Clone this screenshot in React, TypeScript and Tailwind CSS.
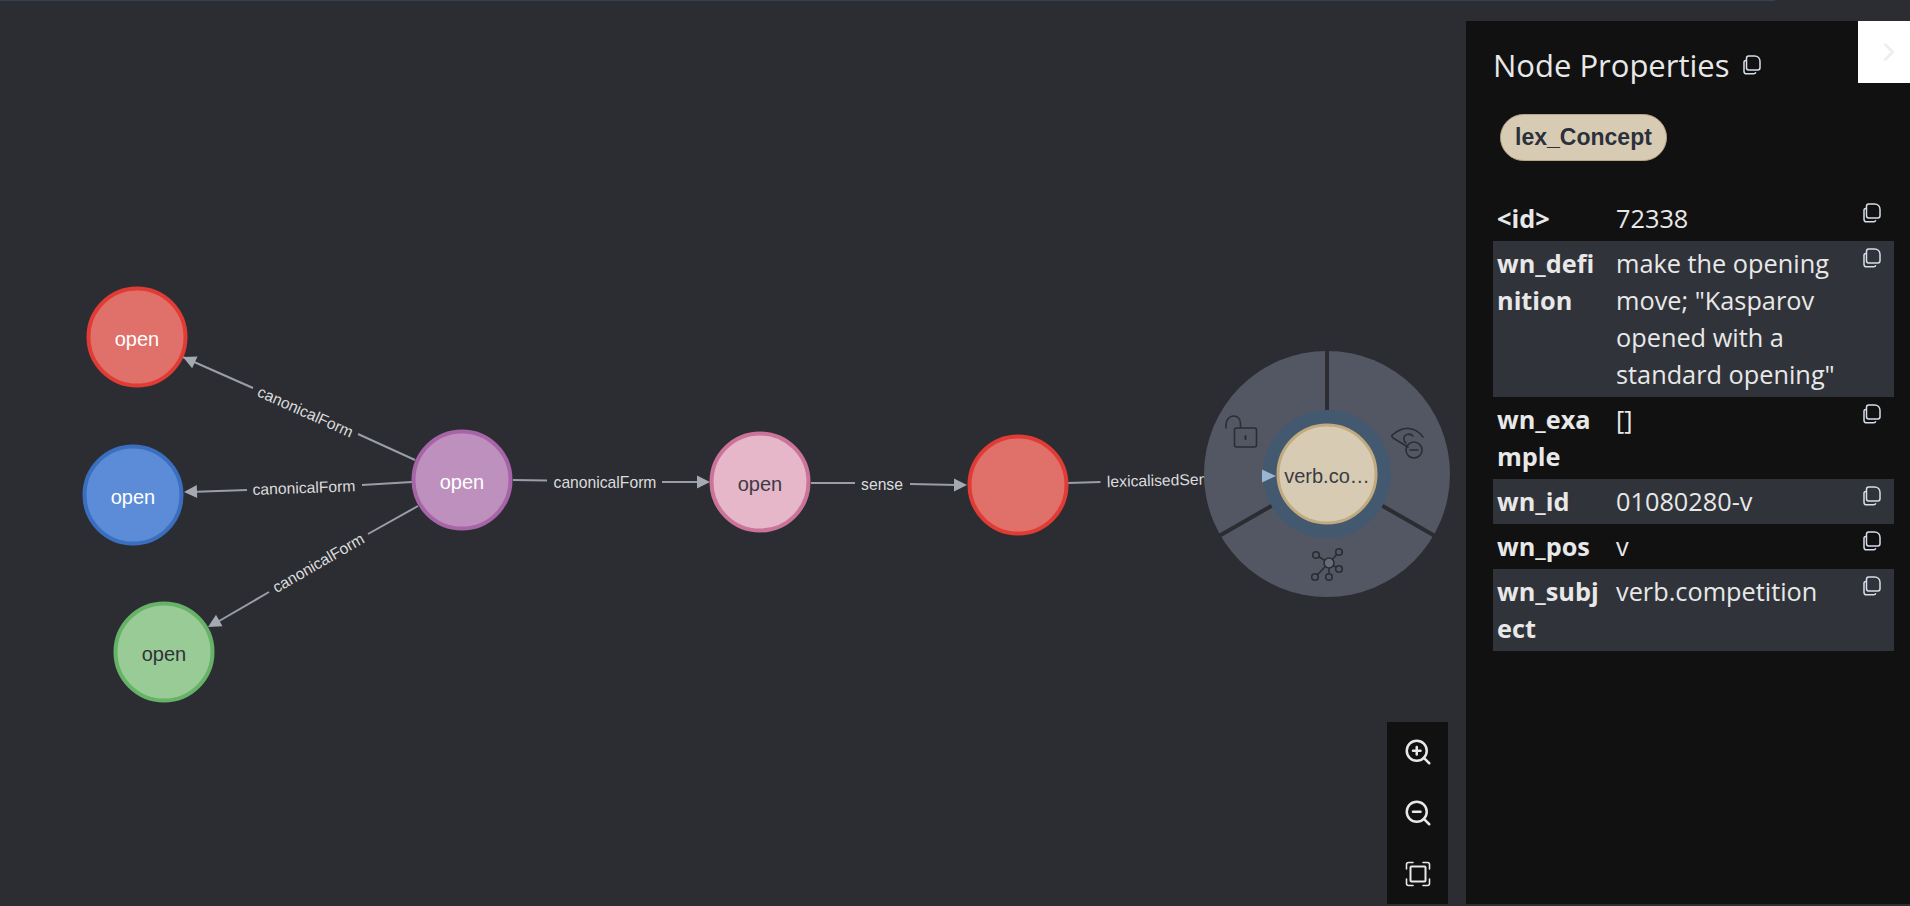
import { ZoomIn, ZoomOut, ChevronRight } from "lucide-react";

const SANS = "font-['Liberation_Sans',Arial,sans-serif]";

// Graph data, coordinates taken from the canvas
const nodes = [
  { x: 137, y: 337, fill: "#e0706a", stroke: "#e03c35", text: "#ffffff", label: "open" },
  { x: 133, y: 495, fill: "#5c8cd8", stroke: "#3a6fbf", text: "#ffffff", label: "open" },
  { x: 164, y: 652, fill: "#99cb97", stroke: "#66b266", text: "#2f3238", label: "open" },
  { x: 462, y: 480, fill: "#be90be", stroke: "#a765a8", text: "#ffffff", label: "open" },
  { x: 760, y: 482, fill: "#e6b6c9", stroke: "#cc7399", text: "#3a3c44", label: "open" },
  { x: 1018, y: 485, fill: "#e0706a", stroke: "#e03c35", text: "#ffffff", label: "" },
];

const edges = [
  { segs: [[415, 460, 358, 434], [253, 388, 176, 354]], tip: [183, 357], angle: 204.3, label: "canonicalForm", lx: 305, ly: 413, rot: 24 },
  { segs: [[412, 482, 362, 485], [247, 490, 190, 492]], tip: [184, 492], angle: 178, label: "canonicalForm", lx: 304, ly: 489, rot: -2 },
  { segs: [[418, 506, 368, 534], [269, 592, 214, 624]], tip: [208, 627], angle: 150, label: "canonicalForm", lx: 319, ly: 564, rot: -30 },
  { segs: [[513, 480, 547, 480.5], [662, 482, 700, 482]], tip: [710, 482], angle: 0, label: "canonicalForm", lx: 605, ly: 484, rot: 0 },
  { segs: [[811, 483, 855, 483], [910, 484, 957, 485]], tip: [967, 485], angle: 0, label: "sense", lx: 882, ly: 486, rot: 0 },
];

const rows = [
  { k: "<id>", v: "72338" },
  { k: "wn_definition", v: 'make the opening move; "Kasparov opened with a standard opening"' },
  { k: "wn_example", v: "[]" },
  { k: "wn_id", v: "01080280-v" },
  { k: "wn_pos", v: "v" },
  { k: "wn_subject", v: "verb.competition" },
];

function CopyIcon() {
  return (
    <svg width="18" height="20" viewBox="0 0 18 20" fill="none" stroke="#d5deea" strokeWidth="1.5" className="shrink-0">
      <path d="M3.5 5.5 H2.8 C1.8 5.5 1 6.3 1 7.3 V16.2 C1 17.6 2.2 18.8 3.6 18.8 H10.8 C11.8 18.8 12.5 18.2 12.8 17.2" />
      <path d="M5.6 1 H11.5 C14.8 1 17 3.4 17 6.6 V12.8 C17 14 16.1 15 14.8 15 H5.6 C4.4 15 3.5 14 3.5 12.8 V3.2 C3.5 2 4.4 1 5.6 1 Z" />
    </svg>
  );
}

function FitIcon() {
  return (
    <svg width="26" height="26" viewBox="0 0 26 26" fill="none" stroke="#e8e8e8" strokeWidth="1.6" strokeLinecap="round" className="mt-[2px]">
      <path d="M1.5 8 V3.5 C1.5 2.4 2.4 1.5 3.5 1.5 H8" />
      <path d="M18 1.5 H22.5 C23.6 1.5 24.5 2.4 24.5 3.5 V8" />
      <path d="M24.5 18 V22.5 C24.5 23.6 23.6 24.5 22.5 24.5 H18" />
      <path d="M8 24.5 H3.5 C2.4 24.5 1.5 23.6 1.5 22.5 V18" />
      <rect x="5.5" y="5.5" width="15" height="15" rx="1" strokeWidth="2" />
    </svg>
  );
}

function Graph() {
  return (
    <svg width="1466" height="905" viewBox="0 1 1466 905" className="block absolute inset-0">
      {edges.map((e, i) => (
        <g key={i}>
          {e.segs.map((s, j) => (
            <line key={j} x1={s[0]} y1={s[1]} x2={s[2]} y2={s[3]} stroke="#9a9ea8" strokeWidth="2" />
          ))}
          <polygon
            points="0,0 -13,-6.5 -13,6.5"
            fill="#a5a9b1"
            transform={`translate(${e.tip[0]} ${e.tip[1]}) rotate(${e.angle})`}
          />
          <text
            x={e.lx}
            y={e.ly}
            textAnchor="middle"
            dominantBaseline="middle"
            fill="#dcdcdc"
            className={`${SANS} text-[15.7px]`}
            transform={`rotate(${e.rot} ${e.lx} ${e.ly})`}
          >
            {e.label}
          </text>
        </g>
      ))}

      {/* edge running into the selected node, its label ends under the ring */}
      <line x1={1068} y1={483} x2={1100.5} y2={482} stroke="#9a9ea8" strokeWidth="2" />
      <text x={1107} y={483} dominantBaseline="middle" fill="#dcdcdc" transform="rotate(-1.5 1107 483)" className={`${SANS} text-[15.7px]`}>
        lexicalisedSense
      </text>

      {nodes.map((n, i) => (
        <g key={i}>
          <circle cx={n.x} cy={n.y} r={48.5} fill={n.fill} stroke={n.stroke} strokeWidth="4" />
          <text x={n.x} y={n.y + 4} textAnchor="middle" dominantBaseline="middle" fill={n.text} className={`${SANS} text-[20px]`}>
            {n.label}
          </text>
        </g>
      ))}

      {/* radial menu around the selected node */}
      <circle cx={1327} cy={474} r={123} fill="#535763" />
      <line x1={1327} y1={474} x2={1327} y2={349} stroke="#2b2d33" strokeWidth="4" />
      <line x1={1327} y1={474} x2={1219} y2={536} stroke="#2b2d33" strokeWidth="4" />
      <line x1={1327} y1={474} x2={1435} y2={536} stroke="#2b2d33" strokeWidth="4" />
      <circle cx={1327} cy={474} r={64} fill="#43596f" />
      <circle cx={1327} cy={474} r={49} fill="#d8cbb3" stroke="#c2aa80" strokeWidth="3" />
      <polygon points="1276,476 1262,469.5 1262,482.5" fill="#9ab4d4" />
      <text x={1327} y={478} textAnchor="middle" dominantBaseline="middle" fill="#3a3c44" className={`${SANS} text-[20px]`}>
        verb.co…
      </text>

      {/* unlock */}
      <g fill="none" stroke="#2b2d33" strokeWidth="1.6" strokeLinecap="round">
        <rect x="1234.5" y="428" width="22" height="19" rx="2" />
        <path d="M1226 428 V425 C1226 419.5 1229.5 416 1233.5 416 C1237.5 416 1240.5 419 1240.5 424 V427.5" />
        <path d="M1245.5 436 V439" strokeWidth="2" />
      </g>
      {/* dismiss */}
      <g fill="none" stroke="#2b2d33" strokeWidth="1.6" strokeLinecap="round">
        <path d="M1408 447 L1393 438 C1391.5 437 1391.5 435.5 1393 434.5 C1403 426 1415 426 1423 437" />
        <path d="M1413 436 C1409 432 1403 435 1404 440 C1404.3 441.5 1405 442.5 1406 443" />
        <circle cx="1414" cy="450" r="8" />
        <path d="M1410 450 H1418" />
      </g>
      {/* expand */}
      <g fill="none" stroke="#2b2d33" strokeWidth="1.6">
        <path d="M1329 563 L1316 555 M1329 563 L1339 552 M1329 563 L1339 569 M1329 563 L1315 577 M1329 563 L1329 577" />
        <circle cx="1329" cy="563" r="5" fill="#696c76" />
        <circle cx="1316" cy="555" r="3.3" fill="#535763" />
        <circle cx="1339" cy="552" r="3.3" fill="#535763" />
        <circle cx="1339" cy="569" r="3.3" fill="#535763" />
        <circle cx="1315" cy="577" r="3.3" fill="#535763" />
        <circle cx="1329" cy="577" r="3.3" fill="#535763" />
      </g>
    </svg>
  );
}

function PropertiesPanel() {
  return (
    <aside className="relative w-[444px] mt-[20px] mb-[2px] bg-[#111111] pl-[27px] pr-4 font-['Open_Sans',sans-serif] text-[#e8e8e8]">
      <div className="absolute top-0 right-0 w-[52px] h-[62px] bg-white flex items-center justify-center pl-[10px]">
        <ChevronRight size={30} strokeWidth={2} className="text-[#eeeeee]" />
      </div>
      <div className="flex items-center gap-[14px] pt-[26px] h-[62px]">
        <h1 className="text-[31px] leading-[36px] font-normal">Node Properties</h1>
        <CopyIcon />
      </div>
      <div className={`mt-[31px] ml-[7px] w-[167px] h-[47px] rounded-full bg-[#d8cbb3] border border-[#b8a585] flex items-center justify-center ${SANS} font-bold text-[23px] text-[#2b303d]`}>
        lex_Concept
      </div>
      <div className="mt-[35px]">
        {rows.map((r, i) => (
          <div key={r.k} className={`flex py-1 text-[25.3px] leading-[37px] ${i % 2 === 1 ? "bg-[#31333a]" : ""}`}>
            <div className="w-[119px] shrink-0 pl-1 pr-1 font-bold break-all">{r.k}</div>
            <div className="flex-1 pl-1 pr-1 min-w-0">{r.v}</div>
            <div className="w-[31px] shrink-0 pt-[3px]">
              <CopyIcon />
            </div>
          </div>
        ))}
      </div>
    </aside>
  );
}

export default function App() {
  return (
    <div className="h-screen w-full flex flex-col bg-[#2b2d33] overflow-hidden">
      <div className="h-px w-[1775px] bg-[#34434f] shrink-0" />
      <div className="flex-1 flex min-h-0">
        <main className="relative flex-1">
          <Graph />
          <div className="absolute right-[18px] bottom-[2px] w-[61px] h-[182px] bg-[#111111] flex flex-col items-center gap-[31px] pt-[15px] text-[#e8e8e8]">
            <ZoomIn size={30} strokeWidth={2} />
            <ZoomOut size={30} strokeWidth={2} />
            <FitIcon />
          </div>
        </main>
        <PropertiesPanel />
      </div>
    </div>
  );
}
